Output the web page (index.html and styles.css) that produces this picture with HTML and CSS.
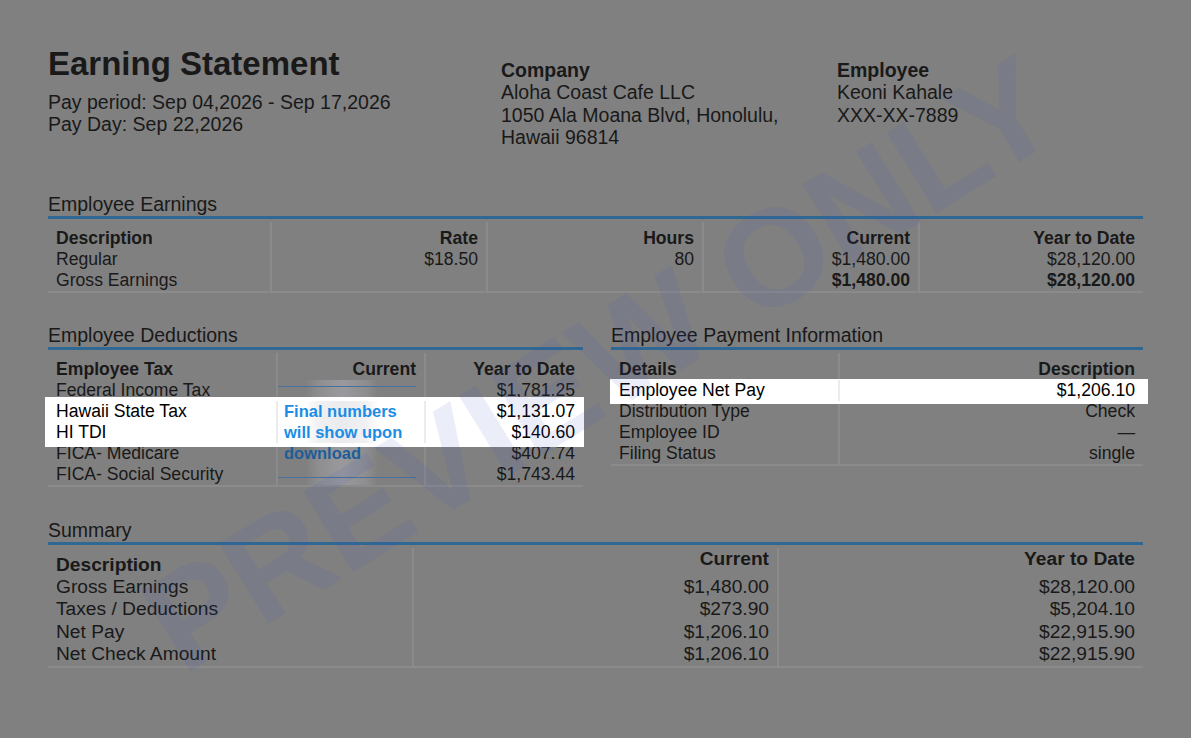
FILE: index.html
```html
<!DOCTYPE html>
<html lang="en">
<head>
<meta charset="utf-8">
<title>Earning Statement</title>
<link rel="stylesheet" href="styles.css">
</head>
<body>
<div class="page">
  <header class="top">
    <div class="title-block">
      <h1 class="title">Earning Statement</h1>
      <div class="meta">Pay period: Sep 04,2026 - Sep 17,2026</div>
      <div class="meta">Pay Day: Sep 22,2026</div>
    </div>
    <div class="party">
      <div class="party-label">Company</div>
      <div>Aloha Coast Cafe LLC</div>
      <div>1050 Ala Moana Blvd, Honolulu,<br>Hawaii 96814</div>
    </div>
    <div class="party">
      <div class="party-label">Employee</div>
      <div>Keoni Kahale</div>
      <div>XXX-XX-7889</div>
    </div>
  </header>

  <section class="section earnings">
    <h2 class="sec-title">Employee Earnings</h2>
    <div class="tbl earn-tbl">
      <div class="row head">
        <div class="cell">Description</div>
        <div class="cell r">Rate</div>
        <div class="cell r">Hours</div>
        <div class="cell r">Current</div>
        <div class="cell r">Year to Date</div>
      </div>
      <div class="row">
        <div class="cell">Regular</div>
        <div class="cell r">$18.50</div>
        <div class="cell r">80</div>
        <div class="cell r">$1,480.00</div>
        <div class="cell r">$28,120.00</div>
      </div>
      <div class="row">
        <div class="cell">Gross Earnings</div>
        <div class="cell r"></div>
        <div class="cell r"></div>
        <div class="cell r b">$1,480.00</div>
        <div class="cell r b">$28,120.00</div>
      </div>
    </div>
  </section>

  <div class="split">
    <section class="section">
      <h2 class="sec-title">Employee Deductions</h2>
      <div class="tbl ded-tbl">
        <div class="row head">
          <div class="cell">Employee Tax</div>
          <div class="cell r">Current</div>
          <div class="cell r">Year to Date</div>
        </div>
        <div class="row">
          <div class="cell">Federal Income Tax</div>
          <div class="cell blur blur-top"></div>
          <div class="cell r">$1,781.25</div>
        </div>
        <div class="hl hl-ded">
          <div class="row">
            <div class="cell">Hawaii State Tax</div>
            <div class="cell blur note">Final numbers</div>
            <div class="cell r">$1,131.07</div>
          </div>
          <div class="row">
            <div class="cell">HI TDI</div>
            <div class="cell blur note">will show upon</div>
            <div class="cell r">$140.60</div>
          </div>
        </div>
        <div class="row">
          <div class="cell">FICA- Medicare</div>
          <div class="cell blur note">download</div>
          <div class="cell r">$407.74</div>
        </div>
        <div class="row">
          <div class="cell">FICA- Social Security</div>
          <div class="cell blur blur-bottom"></div>
          <div class="cell r">$1,743.44</div>
        </div>
      </div>
    </section>

    <section class="section">
      <h2 class="sec-title">Employee Payment Information</h2>
      <div class="tbl pay-tbl">
        <div class="row head">
          <div class="cell">Details</div>
          <div class="cell r">Description</div>
        </div>
        <div class="hl hl-pay">
          <div class="row">
            <div class="cell">Employee Net Pay</div>
            <div class="cell r">$1,206.10</div>
          </div>
        </div>
        <div class="row">
          <div class="cell">Distribution Type</div>
          <div class="cell r">Check</div>
        </div>
        <div class="row">
          <div class="cell">Employee ID</div>
          <div class="cell r">&mdash;</div>
        </div>
        <div class="row">
          <div class="cell">Filing Status</div>
          <div class="cell r">single</div>
        </div>
      </div>
    </section>
  </div>

  <section class="section summary">
    <h2 class="sec-title">Summary</h2>
    <div class="tbl sum-tbl">
      <div class="row head">
        <div class="cell desc-head">Description</div>
        <div class="cell r">Current</div>
        <div class="cell r">Year to Date</div>
      </div>
      <div class="row">
        <div class="cell">Gross Earnings</div>
        <div class="cell r">$1,480.00</div>
        <div class="cell r">$28,120.00</div>
      </div>
      <div class="row">
        <div class="cell">Taxes / Deductions</div>
        <div class="cell r">$273.90</div>
        <div class="cell r">$5,204.10</div>
      </div>
      <div class="row">
        <div class="cell">Net Pay</div>
        <div class="cell r">$1,206.10</div>
        <div class="cell r">$22,915.90</div>
      </div>
      <div class="row">
        <div class="cell">Net Check Amount</div>
        <div class="cell r">$1,206.10</div>
        <div class="cell r">$22,915.90</div>
      </div>
    </div>
  </section>
</div>

<div class="watermark" aria-hidden="true">PREVIEW ONLY</div>
</body>
</html>
```

FILE: styles.css
```css
* {
  box-sizing: border-box;
  margin: 0;
  padding: 0;
}

html,
body {
  background: #808080;
}

body {
  position: relative;
  width: 1191px;
  height: 738px;
  overflow: hidden;
  font-family: "Liberation Sans", Arial, Helvetica, sans-serif;
  color: #191919;
}

.page {
  padding: 45px 48px 0;
}

/* ---------- header ---------- */
.top {
  display: grid;
  grid-template-columns: 453px 336px 1fr;
  align-items: start;
}

.title {
  font-size: 33px;
  line-height: 38px;
  font-weight: bold;
  margin-bottom: 7.5px;
}

.meta {
  font-size: 19.5px;
  line-height: 22px;
}

.party {
  margin-top: 14px;
  font-size: 19.5px;
  line-height: 22.4px;
}

.party-label {
  font-weight: bold;
}

/* ---------- sections ---------- */
.section .sec-title {
  font-size: 19.5px;
  line-height: 22px;
  font-weight: normal;
  padding-bottom: 1px;
  border-bottom: 3px solid #2f6892;
}

.earnings {
  margin-top: 44.4px;
}

.split {
  display: grid;
  grid-template-columns: 535px 532px;
  column-gap: 28px;
  align-items: start;
  margin-top: 31px;
}

.summary {
  margin-top: 32px;
}

/* ---------- tables ---------- */
.tbl {
  margin-top: 3px;
  border-bottom: 2px solid #8b8b8b;
  font-size: 17.6px;
  line-height: 21px;
}

.row {
  display: grid;
}

.cell {
  padding: 0 8px;
  white-space: nowrap;
}

.cell + .cell {
  border-left: 2px solid #8b8b8b;
}

.head .cell {
  font-weight: bold;
  padding-top: 6px;
}

.r {
  text-align: right;
}

.b {
  font-weight: bold;
}

.earn-tbl .row {
  grid-template-columns: 222px 216px 216px 216px 225px;
}

.ded-tbl .row {
  grid-template-columns: 228px 148px 159px;
}

.pay-tbl .row {
  grid-template-columns: 227px 305px;
}

/* blurred "current" column */
.blur {
  background-image: linear-gradient(90deg,
      transparent 28px,
      rgba(190, 190, 200, 0.22) 40px,
      rgba(200, 200, 210, 0.36) 64px,
      rgba(190, 190, 200, 0.22) 88px,
      transparent 100px);
}

.blur-top {
  background-image:
    linear-gradient(#47709a, #47709a),
    linear-gradient(90deg,
      transparent 28px,
      rgba(190, 190, 200, 0.22) 40px,
      rgba(200, 200, 210, 0.36) 64px,
      rgba(190, 190, 200, 0.22) 88px,
      transparent 100px);
  background-size: 138px 1px, 100% 100%;
  background-position: 0 6px, 0 0;
  background-repeat: no-repeat;
}

.blur-bottom {
  background-image:
    linear-gradient(#47709a, #47709a),
    linear-gradient(90deg,
      transparent 28px,
      rgba(190, 190, 200, 0.22) 40px,
      rgba(200, 200, 210, 0.36) 64px,
      rgba(190, 190, 200, 0.22) 88px,
      transparent 100px);
  background-size: 138px 1px, 100% 100%;
  background-position: 0 13px, 0 0;
  background-repeat: no-repeat;
}

.note {
  padding-left: 6px;
  font-size: 16.5px;
  font-weight: bold;
  color: #1d5e98;
}

/* highlighted rows */
.hl {
  position: relative;
  background: #ffffff;
  color: #000000;
}

.hl .cell + .cell {
  border-left-color: #ececec;
}

.hl .note {
  color: #1c8de4;
}

.hl-ded {
  margin: -4px -1px -4px -3px;
  padding: 4px 1px 4px 3px;
}

.hl-pay {
  margin: -1px -5px -3px -1px;
  padding: 1px 5px 3px 1px;
}

/* summary */
.sum-tbl {
  font-size: 19.2px;
  line-height: 22.4px;
}

.sum-tbl .row {
  grid-template-columns: 364px 365px 366px;
}

.sum-tbl .head {
  height: 28px;
}

.sum-tbl .head .cell {
  padding-top: 0;
}

.sum-tbl .head .desc-head {
  padding-top: 6px;
}

/* watermark */
.watermark {
  position: absolute;
  left: 600px;
  top: 364px;
  z-index: 5;
  transform: translate(-50%, -50%) rotate(-31.6deg);
  font-size: 137px;
  line-height: 1;
  font-weight: bold;
  white-space: nowrap;
  color: rgba(60, 80, 190, 0.1);
  pointer-events: none;
}
```
